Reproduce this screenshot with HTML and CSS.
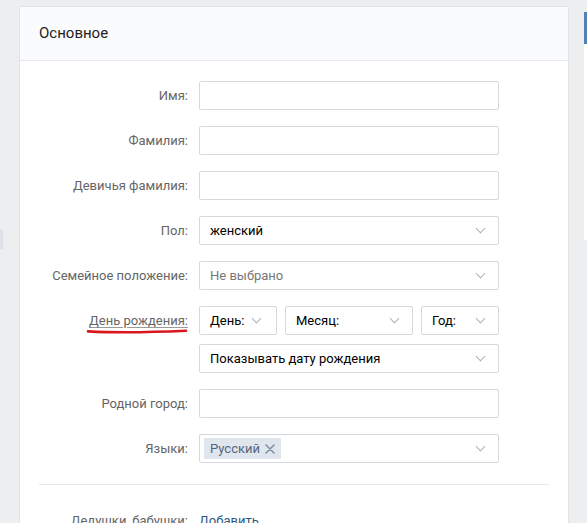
FILE: index.html
```html
<!DOCTYPE html>
<html lang="ru">
<head>
<meta charset="utf-8">
<title>Основное</title>
<link rel="stylesheet" href="styles.css">
</head>
<body>
<div class="page">
  <div class="left-rail"><div class="rail-item"></div></div>
  <div class="card">
    <div class="card-header">Основное</div>
    <div class="form">
      <div class="row">
        <div class="label">Имя:</div>
        <div class="field"><div class="input"></div></div>
      </div>
      <div class="row">
        <div class="label">Фамилия:</div>
        <div class="field"><div class="input"></div></div>
      </div>
      <div class="row">
        <div class="label">Девичья фамилия:</div>
        <div class="field"><div class="input"></div></div>
      </div>
      <div class="row">
        <div class="label">Пол:</div>
        <div class="field"><div class="input select"><span class="value">женский</span><span class="chev"></span></div></div>
      </div>
      <div class="row">
        <div class="label">Семейное положение:</div>
        <div class="field"><div class="input select"><span class="value muted">Не выбрано</span><span class="chev"></span></div></div>
      </div>
      <div class="row">
        <div class="label"><span class="birth">День рождения:<svg class="scribble" width="102" height="8" viewBox="0 0 102 8"><path d="M2 4.4 C 25 5.6, 60 5.6, 100 3.8" fill="none" stroke="#d9161c" stroke-width="2.6" stroke-linecap="round"/></svg></span></div>
        <div class="field stack">
          <div class="date-row">
            <div class="input select day"><span class="value">День:</span><span class="chev"></span></div>
            <div class="input select month"><span class="value">Месяц:</span><span class="chev"></span></div>
            <div class="input select year"><span class="value">Год:</span><span class="chev"></span></div>
          </div>
          <div class="input select"><span class="value">Показывать дату рождения</span><span class="chev"></span></div>
        </div>
      </div>
      <div class="row">
        <div class="label">Родной город:</div>
        <div class="field"><div class="input"></div></div>
      </div>
      <div class="row">
        <div class="label">Языки:</div>
        <div class="field"><div class="input select tags"><span class="tag">Русский<svg class="x" width="10" height="10" viewBox="0 0 10 10"><path d="M1 1 L9 9 M9 1 L1 9" stroke="#7f8fa1" stroke-width="1.6" stroke-linecap="round"/></svg></span><span class="chev"></span></div></div>
      </div>
    </div>
    <div class="divider"></div>
    <div class="form second">
      <div class="row">
        <div class="label">Дедушки, бабушки:</div>
        <div class="field"><a class="link" href="#">Добавить</a></div>
      </div>
    </div>
  </div>
  <div class="right-rail"><div class="panel"><div class="panel-bar"></div></div></div>
</div>
</body>
</html>
```
FILE: styles.css
```css
html, body {
  margin: 0;
  padding: 0;
  background: #edeef0;
  font-family: Roboto, "Open Sans", "Liberation Sans", sans-serif;
  font-size: 13px;
  color: #000;
  overflow: hidden;
}
.page {
  display: flex;
  align-items: flex-start;
  width: 587px;
  height: 523px;
}
.left-rail {
  width: 3px;
  flex: none;
  padding-top: 230px;
}
.rail-item {
  height: 19px;
  background: #dde2ea;
}
.card {
  flex: none;
  width: 548px;
  margin-left: 16px;
  margin-top: 6px;
  background: #fff;
  border: 1px solid #e1e3e7;
  border-radius: 2px 2px 0 0;
  height: 600px;
}
.card-header {
  height: 53px;
  line-height: 52px;
  padding-left: 19px;
  background: #fafbfc;
  border-bottom: 1px solid #e7e8ec;
  font-size: 15px;
  color: #222;
}
.form {
  padding: 20px 0 0 19px;
  display: flex;
  flex-direction: column;
  gap: 16px;
}
.row {
  display: flex;
  align-items: flex-start;
  gap: 11px;
}
.label {
  width: 149px;
  flex: none;
  text-align: right;
  color: #656565;
  font-size: 13px;
  line-height: 29px;
  white-space: nowrap;
}
.birth {
  position: relative;
  text-decoration: underline;
  text-decoration-color: #9a9a9a;
  text-underline-offset: 2px;
}
.scribble {
  position: absolute;
  left: -3px;
  top: 14px;
}
.field {
  width: 300px;
  flex: none;
}
.stack {
  display: flex;
  flex-direction: column;
  gap: 9px;
}
.input {
  box-sizing: border-box;
  height: 29px;
  border: 1px solid #d3d9de;
  border-radius: 2px;
  background: #fff;
}
.select {
  display: flex;
  align-items: center;
  justify-content: space-between;
  padding: 0 11px 0 10px;
}
.value {
  font-size: 13px;
  color: #000;
  white-space: nowrap;
}
.value.muted {
  color: #777;
}
.chev {
  width: 6px;
  height: 6px;
  border-right: 1.2px solid #a9b4c0;
  border-bottom: 1.2px solid #a9b4c0;
  transform: rotate(45deg);
  margin-top: -4px;
  margin-right: 3px;
}
.date-row {
  display: flex;
  gap: 8px;
}
.day { width: 78px; padding-right: 13px; }
.month { width: 128px; }
.year { width: 78px; }
.tags {
  padding-left: 4px;
}
.tag {
  display: flex;
  align-items: center;
  height: 21px;
  padding: 0 6px 0 6px;
  background: #dfe6ed;
  color: #55677d;
  font-size: 13px;
  border-radius: 1px;
}
.x {
  margin-left: 5px;
}
.divider {
  height: 1px;
  background: #e7e8ec;
  margin: 21px 19px 0 19px;
}
.second {
  padding-top: 21px;
}
.second .field {
  line-height: 29px;
}
.link {
  color: #2a5885;
  text-decoration: none;
  font-size: 13px;
}
.right-rail {
  flex: none;
  width: 3px;
  margin-left: 15px;
  padding-top: 12px;
}
.panel {
  height: 228px;
  background: #fff;
}
.panel-bar {
  height: 32px;
  background: #5181b8;
}
```
